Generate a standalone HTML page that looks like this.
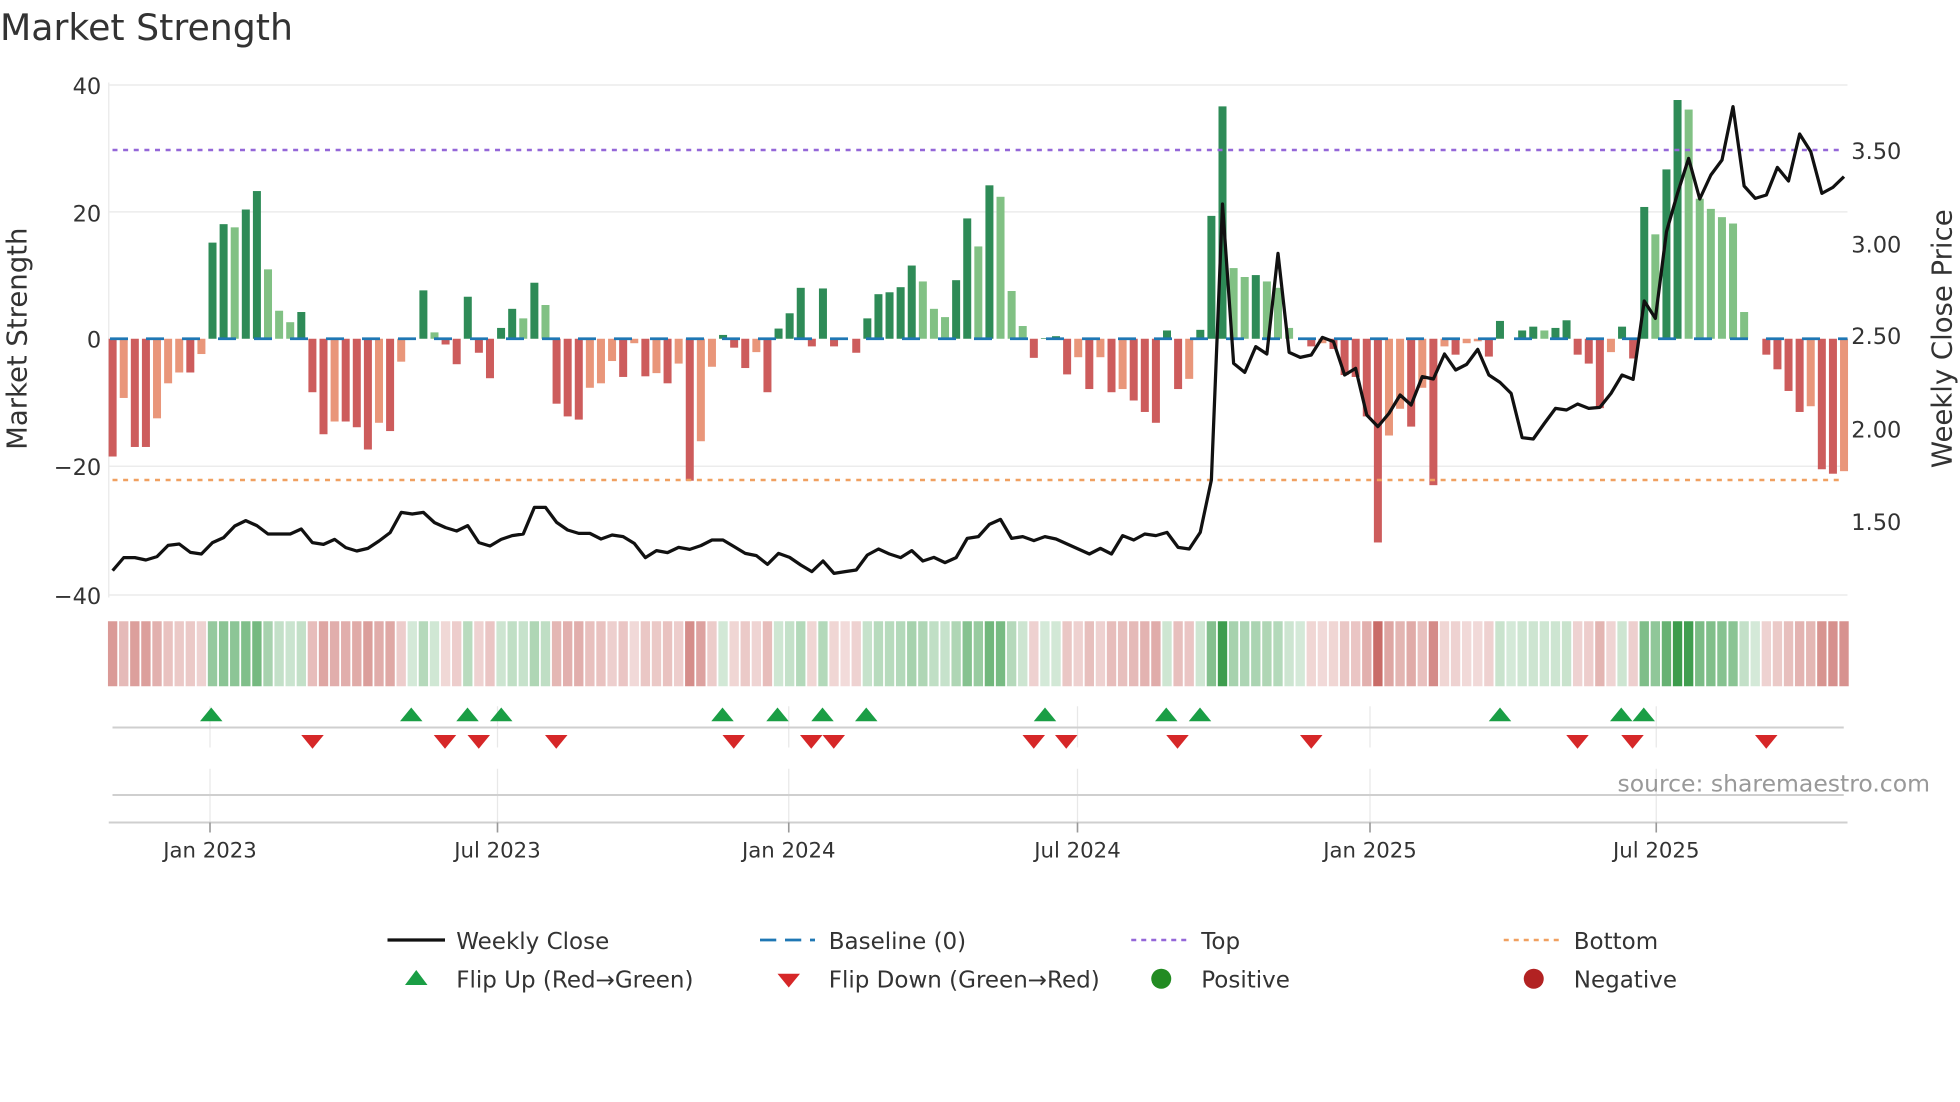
<!DOCTYPE html>
<html><head><meta charset="utf-8"><style>
html,body{margin:0;padding:0;background:#fff;}
svg{display:block;font-family:"DejaVu Sans","Liberation Sans",sans-serif;}
</style></head><body>
<svg id="c" width="1960" height="1102" viewBox="0 0 1568 881.6" xmlns="http://www.w3.org/2000/svg">
<rect width="1568" height="881.6" fill="#fff"/>
<text x="0" y="32" font-size="29" fill="#333">Market Strength</text>
<g stroke="#ececec" stroke-width="1.2">
<line x1="87" y1="68" x2="1478" y2="68"/><line x1="87" y1="169.5" x2="1478" y2="169.5"/>
<line x1="87" y1="373" x2="1478" y2="373"/><line x1="87" y1="476" x2="1478" y2="476"/>
<line x1="87" y1="66" x2="87" y2="478"/>
</g>
<g font-size="18" fill="#333" text-anchor="end">
<text x="81" y="75">40</text><text x="81" y="177">20</text><text x="81" y="278">0</text>
<text x="81" y="380">−20</text><text x="81" y="483">−40</text>
</g>
<g font-size="18" fill="#333">
<text x="1481" y="127">3.50</text><text x="1481" y="202">3.00</text><text x="1481" y="275">2.50</text>
<text x="1481" y="350">2.00</text><text x="1481" y="424">1.50</text>
</g>
<text transform="translate(21,271) rotate(-90)" font-size="22" fill="#333" text-anchor="middle">Market Strength</text>
<text transform="translate(1561,271) rotate(-90)" font-size="22" fill="#333" text-anchor="middle">Weekly Close Price</text>
<g id="bars"></g>
<line x1="88" y1="271" x2="1478" y2="271" stroke="#1f77b4" stroke-width="2.2" stroke-dasharray="14.4 14.4"/>
<line x1="90" y1="120" x2="1475" y2="120" stroke="#9467d8" stroke-width="2" stroke-dasharray="4 4.5"/>
<line x1="90" y1="384" x2="1475" y2="384" stroke="#f0a060" stroke-width="2" stroke-dasharray="4 4.5"/>
<polyline id="price" fill="none" stroke="#111" stroke-width="2.6" stroke-linejoin="round"/>
<g id="heat"></g>
<g stroke="#e8e8e8" stroke-width="1">
<line x1="168" y1="565" x2="168" y2="598"/><line x1="398" y1="565" x2="398" y2="598"/><line x1="631" y1="565" x2="631" y2="598"/>
<line x1="862" y1="565" x2="862" y2="598"/><line x1="1096" y1="565" x2="1096" y2="598"/><line x1="1325" y1="565" x2="1325" y2="598"/>
<line x1="168" y1="615" x2="168" y2="658"/><line x1="398" y1="615" x2="398" y2="658"/><line x1="631" y1="615" x2="631" y2="658"/>
<line x1="862" y1="615" x2="862" y2="658"/><line x1="1096" y1="615" x2="1096" y2="658"/><line x1="1325" y1="615" x2="1325" y2="658"/>
</g>
<g stroke="#cfcfcf" stroke-width="1.6">
<line x1="90" y1="582" x2="1475" y2="582"/><line x1="90" y1="636" x2="1475" y2="636"/>
<line x1="87" y1="658" x2="1478" y2="658"/>
</g>
<g stroke="#999" stroke-width="1.3">
<line x1="168" y1="658" x2="168" y2="666"/><line x1="398" y1="658" x2="398" y2="666"/><line x1="631" y1="658" x2="631" y2="666"/>
<line x1="862" y1="658" x2="862" y2="666"/><line x1="1096" y1="658" x2="1096" y2="666"/><line x1="1325" y1="658" x2="1325" y2="666"/>
</g>
<g id="tri"></g>
<text x="1544" y="633" font-size="18.8" fill="#999" text-anchor="end">source: sharemaestro.com</text>
<g font-size="17" fill="#333" text-anchor="middle">
<text x="168" y="686">Jan 2023</text><text x="398" y="686">Jul 2023</text><text x="631" y="686">Jan 2024</text>
<text x="862" y="686">Jul 2024</text><text x="1096" y="686">Jan 2025</text><text x="1325" y="686">Jul 2025</text>
</g>
<g font-size="18.4" fill="#333">
<line x1="310" y1="752" x2="356" y2="752" stroke="#111" stroke-width="2.6"/>
<text x="365" y="759">Weekly Close</text>
<line x1="608" y1="752" x2="652" y2="752" stroke="#1f77b4" stroke-width="2.2" stroke-dasharray="13 7"/>
<text x="663" y="759">Baseline (0)</text>
<line x1="905" y1="752" x2="950" y2="752" stroke="#9467d8" stroke-width="2" stroke-dasharray="4 4"/>
<text x="961" y="759">Top</text>
<line x1="1203" y1="752" x2="1248" y2="752" stroke="#f0a060" stroke-width="2" stroke-dasharray="4 4"/>
<text x="1259" y="759">Bottom</text>
<polygon points="324,788 342,788 333,776" fill="#1a9e45"/>
<text x="365" y="790">Flip Up (Red→Green)</text>
<polygon points="622,779 640,779 631,790" fill="#d62728"/>
<text x="663" y="790">Flip Down (Green→Red)</text>
<circle cx="929" cy="783" r="8" fill="#228b22"/>
<text x="961" y="790">Positive</text>
<circle cx="1227" cy="783" r="8" fill="#b22222"/>
<text x="1259" y="790">Negative</text>
</g>
</svg>
<script>
var B="R-18.5 O-9.3 R-17 R-17 O-12.5 O-7 O-5.3 R-5.3 O-2.4 D15.1 D18 L17.5 D20.3 D23.2 L10.9 L4.4 L2.6 D4.2 R-8.4 R-15 O-13 R-13 R-13.9 R-17.4 O-13.2 R-14.5 O-3.6 D0 D7.6 L1 R-0.9 R-4 D6.6 R-2.2 R-6.2 D1.7 D4.7 L3.2 D8.8 L5.3 R-10.2 R-12.2 R-12.7 O-7.7 O-7 O-3.5 R-6 O-0.7 R-5.9 O-5.4 R-7 O-3.9 R-22.3 O-16.1 O-4.4 D0.6 R-1.4 R-4.6 O-2.1 R-8.4 D1.6 D4 D8 R-1.2 D7.9 R-1.2 R0 R-2.2 D3.2 D7 D7.3 D8.1 D11.5 L9 L4.7 L3.4 D9.2 D18.9 L14.5 D24.1 L22.3 L7.5 L2 R-3 D0.1 D0.4 R-5.6 O-2.9 R-7.9 O-2.9 R-8.4 O-7.9 R-9.7 R-11.5 R-13.2 D1.3 R-7.9 O-6.3 D1.4 D19.3 D36.5 L11.1 L9.7 D10 L9 L8 L1.7 L0 R-1.2 O-0.7 R-1.6 R-5.7 R-6 R-12.2 R-32 O-15.2 O-11 R-13.8 O-7.7 R-23 O-1.2 R-2.5 O-0.7 O-0.4 R-2.8 D2.8 D0 D1.3 D1.9 L1.3 D1.7 D2.9 R-2.5 R-3.9 R-10.9 O-2.1 D1.9 R-3.1 D20.7 L16.4 D26.6 D37.5 L36 L22 L20.4 L19.1 L18.1 L4.2 L0 R-2.5 R-4.8 R-8.2 R-11.5 O-10.6 R-20.5 R-21.2 O-20.8".split(" ");
var P=[1472,1433,1433,1440,1430,1396,1392,1417,1422,1388,1373,1338,1322,1337,1362,1362,1362,1347,1388,1393,1378,1403,1413,1405,1383,1358,1297,1302,1297,1328,1343,1353,1337,1388,1398,1378,1367,1362,1282,1282,1327,
1350,1360,1360,1377,1365,1370,1390,1433,1412,1418,1402,1408,1397,1380,1380,1400,1420,1427,1453,1420,1432,1455,1475,1443,1480,1475,1470,1425,1407,1422,1433,1412,1443,1432,1448,1433,1375,1370,1333,1318,
1375,1370,1382,1370,1377,1392,1407,1422,1405,1422,1367,1380,1362,1367,1357,1402,1407,1357,1200,372,850,877,800,822,520,817,832,825,772,785,885,865,1005,1040,1000,945,975,890,897,
822,870,853,808,885,907,940,1073,1077,1030,985,990,972,985,982,940,885,898,663,715,455,340,235,357,285,240,80,318,355,345,262,303,162,215,340,322,290];
var col={D:"#2e8b57",L:"#81c184",R:"#cd5c5c",O:"#e9967a"};
var ns="http://www.w3.org/2000/svg";
function el(t,a,p){var e=document.createElementNS(ns,t);for(var k in a)e.setAttribute(k,a[k]);p.appendChild(e);return e;}
var bars=document.getElementById("bars"),heat=document.getElementById("heat");
var x0=90.1,dx=8.879,w=6.4,pts=[];
for(var i=0;i<B.length;i++){
 var c=B[i][0],v=parseFloat(B[i].slice(1)),x=x0+i*dx;
 var y=271-v*5.093;
 if(Math.abs(v)>0.05) el("rect",{x:x-w/2,y:Math.min(y,271),width:w,height:Math.abs(271-y),fill:col[c]},bars);
 var pos=(c=="D"||c=="L");
 var t=Math.min(1,Math.abs(v)/37);
 var a=0.22+0.78*t;
 el("rect",{x:x-dx/2+0.7,y:497,width:dx-1.4,height:52,fill:pos?"#3c9c4c":"#c25a55","fill-opacity":a.toFixed(2)},heat);
 if(i<P.length) pts.push(x.toFixed(1)+","+(64+P[i]/3.75).toFixed(1));
}
document.getElementById("price").setAttribute("points",pts.join(" "));
var tri=document.getElementById("tri");
[169,329,374,401,578,622,658,693,836,933,960,1200,1297,1315].forEach(function(x){el("polygon",{points:(x-9)+",577 "+(x+9)+",577 "+x+",566",fill:"#1a9e45"},tri);});
[250,356,383,445,587,649,667,827,853,942,1049,1262,1306,1413].forEach(function(x){el("polygon",{points:(x-9)+",588 "+(x+9)+",588 "+x+",599",fill:"#d62728"},tri);});
</script>
</body></html>
